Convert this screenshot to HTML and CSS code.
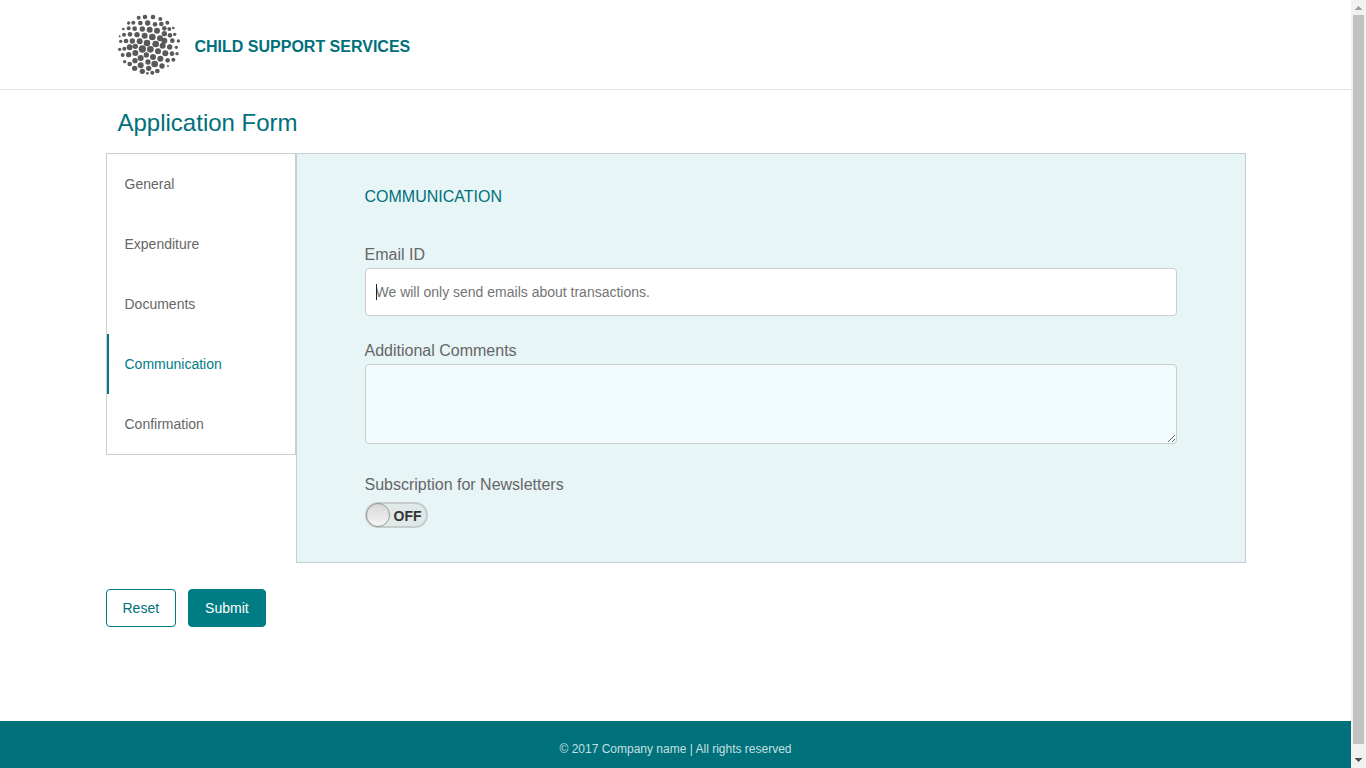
FILE: index.html
```html
<!DOCTYPE html>
<html lang="en">
<head>
<meta charset="utf-8">
<meta name="viewport" content="width=device-width, initial-scale=1">
<title>Application Form</title>
<link rel="stylesheet" href="styles.css">
</head>
<body>
<div class="viewport">
  <div class="page">
    <header class="header">
      <div class="container brand">
        <svg class="logo" viewBox="24 27 189 189" aria-hidden="true"></svg>
        <span class="brand-name">CHILD SUPPORT SERVICES</span>
      </div>
    </header>
    <main class="container main">
      <h1 class="title">Application Form</h1>
      <form class="form">
        <div class="columns">
          <nav class="tabs" aria-label="Form sections">
            <a class="tab" href="#general">General</a>
            <a class="tab" href="#expenditure">Expenditure</a>
            <a class="tab" href="#documents">Documents</a>
            <a class="tab active" href="#communication" aria-current="page">Communication</a>
            <a class="tab" href="#confirmation">Confirmation</a>
          </nav>
          <section class="panel">
            <h2 class="panel-title">COMMUNICATION</h2>
            <div class="field">
              <label class="label" for="email">Email ID</label>
              <div class="input-wrap">
                <input class="control input" id="email" type="email" placeholder="We will only send emails about transactions." autofocus>
              </div>
            </div>
            <div class="field field-comments">
              <label class="label" for="comments">Additional Comments</label>
              <textarea class="control textarea" id="comments"></textarea>
            </div>
            <div class="field">
              <label class="label" for="newsletter">Subscription for Newsletters</label>
              <div class="toggle">
                <input class="knob" id="newsletter" type="checkbox" role="switch">
                <span class="state">OFF</span>
              </div>
            </div>
          </section>
        </div>
        <div class="actions">
          <button class="button" type="reset">Reset</button>
          <button class="button primary" type="submit">Submit</button>
        </div>
      </form>
    </main>
    <footer class="footer">© 2017 Company name | All rights reserved</footer>
  </div>
  <div class="scrollbar" aria-hidden="true">
    <svg class="arrow" viewBox="0 0 15 15"><path fill="#a0a0a0" d="M7 6h1v1h1v1h1v1h1v1H4V9h1V8h1V7h1z"/></svg>
    <div class="thumb"></div>
    <svg class="arrow" viewBox="0 0 15 15"><path fill="#505050" d="M4 5h7v1h-1v1H9v1H8v1H7V8H6V7H5V6H4z"/></svg>
  </div>
</div>
<script src="logo.js"></script>
</body>
</html>
```
FILE: logo.js
```js
// Dots of the spiral mark: x, y, radius
const dots = [
  [86,38,6],[105,36,7],[129,36,7],[151,42,6],
  [56,54,5],[70,53,6],[91,54,7],[113,54,8],[135,58,7],[154,57,7],[172,53,6],
  [40,72,4],[56,70,6],[74,71,7],[97,72,8],[119,74,9],[141,77,9],[163,70,7],[178,72,6],[190,69,4],
  [29,94,3],[42,89,6],[60,88,7],[81,89,8],[104,92,9],[127,96,10],[150,100,9],[163,86,8],[180,91,7],[194,88,5],
  [32,109,5],[48,108,7],[67,108,8],[89,109,9],[111,114,10],[137,117,10],[163,107,9],[187,107,7],[205,108,5],
  [29,133,5],[43,131,6],[59,127,9],[76,124,8],[97,132,11],[121,133,10],[144,139,9],[158,122,9],[179,126,8],[199,127,5],
  [38,150,6],[56,149,8],[76,144,9],[92,159,9],[109,150,8],[129,156,9],[166,145,9],[186,146,7],[201,146,5],
  [44,170,5],[59,177,7],[75,167,8],[92,181,9],[114,171,8],[134,177,10],[151,161,9],[173,166,7],[190,164,6],
  [74,190,8],[97,199,8],[116,190,8],[156,183,8],[174,183,3],
  [112,205,4],[127,203,6],[142,198,7]
];
const logo = document.querySelector('.logo');
for (const [x, y, r] of dots) {
  const dot = document.createElementNS('http://www.w3.org/2000/svg', 'circle');
  dot.setAttribute('cx', x);
  dot.setAttribute('cy', y);
  dot.setAttribute('r', r);
  logo.appendChild(dot);
}
```
FILE: styles.css
```css
* { box-sizing: border-box; }
body { margin: 0; font-family: "Liberation Sans", Arial, sans-serif; font-size: 14px; color: #666; background: #fff; }
.viewport { display: flex; height: 100vh; overflow: hidden; }
.page { flex: 1; display: flex; flex-direction: column; overflow: auto; scrollbar-width: none; }
.container { width: 100%; max-width: 1140px; margin: 0 auto; }
.header { flex: none; border-bottom: 1px solid #e5e5e5; padding: 14px 0 12px; }
.brand { display: flex; align-items: center; gap: 14px; padding: 0 12px; }
.logo { width: 63px; height: 63px; fill: #5a5858; }
.brand-name { padding-top: 2px; font-size: 16px; font-weight: bold; color: #00707a; line-height: 20px; }
.main { flex: 1 0 auto; padding-bottom: 94px; }
.title { margin: 0; padding: 18px 12px 15px; font-size: 24px; line-height: 30px; font-weight: normal; color: #00707a; }
.columns { display: flex; align-items: flex-start; }
.tabs { flex: none; width: 190px; border: 1px solid #c8cece; }
.tab { display: block; padding: 0 16px; border-left: 2px solid transparent; line-height: 60px; color: #666; text-decoration: none; }
.tab.active { border-left-color: #007c85; color: #007c85; }
.panel { flex: 1; padding: 32px 68px 34px; border: 1px solid #c3cfd0; background: #e7f5f7; }
.panel-title { margin: 0 0 34px; font-size: 16px; line-height: 22px; font-weight: normal; color: #00707a; }
.field { margin-bottom: 22px; }
.field-comments { margin-bottom: 28px; }
.field:last-child { margin-bottom: 0; }
.label { display: block; font-size: 16px; line-height: 26px; }
.control { display: block; width: 100%; padding: 10px; border: 1px solid #ccc; border-radius: 4px; background: #f1fafc; font: inherit; color: #333; outline: none; }
.input { height: 48px; caret-color: transparent; }
.input:focus { background: #fff; }
.control::placeholder { color: #757575; }
.input-wrap { position: relative; }
.input-wrap:focus-within::after { content: ""; position: absolute; left: 11px; top: 16px; width: 1px; height: 16px; background: #222; pointer-events: none; }
.input-wrap:has(.input:not(:placeholder-shown))::after { display: none; }
.textarea { height: 80px; resize: vertical; }
.toggle { display: inline-flex; align-items: center; gap: 4px; height: 26px; margin-top: 4px; padding-right: 4px; border: 2px solid #c5cccc; border-radius: 13px; background: #dfe9e8; vertical-align: top; }
.knob { appearance: none; width: 24px; height: 24px; margin: 0 0 0 -1px; border: 1px solid #999; border-radius: 50%; background: linear-gradient(#d8d8d8, #f5f5f5); }
.state { font-weight: bold; color: #333; line-height: 22px; padding-top: 2px; }
.actions { display: flex; gap: 12px; margin-top: 26px; }
.button { height: 38px; padding: 0 16px; border: 1px solid #007c85; border-radius: 4px; background: #fff; color: #00707a; font: inherit; }
.button.primary { background: #007c85; color: #fff; }
.footer { flex: none; background: #00707a; color: #c5e0e2; font-size: 12px; line-height: 56px; text-align: center; }
.scrollbar { flex: none; display: flex; flex-direction: column; width: 15px; background: #f1f1f1; }
.arrow { flex: none; width: 15px; height: 15px; shape-rendering: crispEdges; }
.thumb { flex: 1; margin: 0 2px 9px; background: #c1c1c1; }
```
